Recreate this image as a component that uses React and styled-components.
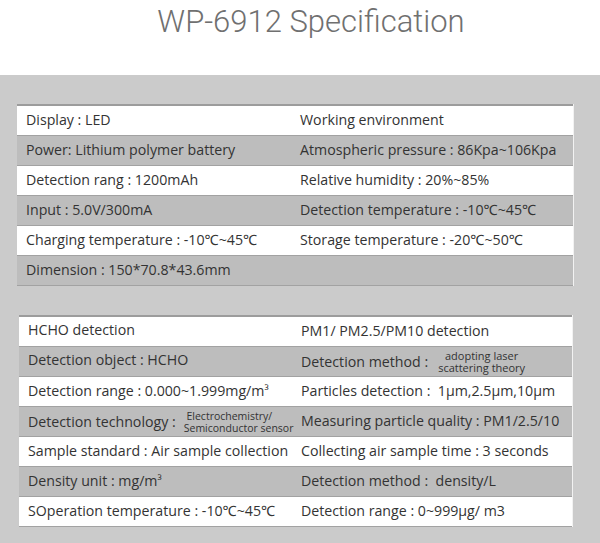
import React from "react";
import styled, { createGlobalStyle } from "styled-components";

const Global = createGlobalStyle`
  html, body { margin: 0; padding: 0; background: #fff; }
  body { width: 600px; height: 543px; overflow: hidden; }
`;

const Page = styled.div`
  width: 600px;
  height: 543px;
  display: flex;
  flex-direction: column;
  font-family: "Open Sans", "Noto Sans", sans-serif;
`;

const Header = styled.div`
  height: 75px;
  display: flex;
  justify-content: center;
  padding-left: 22px;
  box-sizing: border-box;
  background: #fff;
`;

const Title = styled.h1`
  margin: 0;
  font-family: Roboto, "Liberation Sans", sans-serif;
  font-weight: 300;
  font-size: 31px;
  color: #707070;
  line-height: 44px;
`;

const Band = styled.div`
  flex: 1;
  background: #cbcbcb;
  padding: 29px 27px 0 17px;
  display: flex;
  flex-direction: column;
  gap: 29px;
`;

const Table = styled.div`
  display: flex;
  flex-direction: column;
  border-top: 2px solid #9c9c9c;
  margin-left: ${(p) => p.$offset || 0}px;
  margin-right: ${(p) => p.$offsetR || 0}px;
  box-shadow: 1px 0 0 #f2f2f2;
`;

const Row = styled.div`
  display: grid;
  grid-template-columns: ${(p) => p.$split}px 1fr;
  height: 29px;
  align-items: center;
  background: ${(p) => (p.$alt ? "#bdbdbd" : "#ffffff")};
  border-bottom: 1px solid #a2a2a2;
  font-size: 14.2px;
  color: #333;
  white-space: nowrap;
`;

const Cell = styled.div`
  padding-left: ${(p) => p.$pad || 9}px;
  display: flex;
  align-items: center;
  margin-top: ${(p) => (p.$shift !== undefined ? p.$shift : -2)}px;
`;

const Small = styled.span`
  display: inline-block;
  font-size: ${(p) => p.$size || 10.5}px;
  line-height: 12px;
  margin-left: ${(p) => p.$ml || 6}px;
  text-align: ${(p) => p.$align || "left"};
  color: #333;
`;

const Sup = styled.span`
  font-size: 0.85em;
`;

const top = [
  ["Display : LED", "Working environment"],
  ["Power: Lithium polymer battery", "Atmospheric pressure : 86Kpa~106Kpa"],
  ["Detection rang : 1200mAh", "Relative humidity : 20%~85%"],
  ["Input : 5.0V/300mA", "Detection temperature : -10℃~45℃"],
  ["Charging temperature : -10℃~45℃", "Storage temperature : -20℃~50℃"],
  ["Dimension : 150*70.8*43.6mm", ""],
];

export default function App() {
  return (
    <Page>
      <Global />
      <Header>
        <Title>WP-6912 Specification</Title>
      </Header>
      <Band>
        <Table>
          {top.map(([a, b], i) => (
            <Row key={i} $alt={i % 2 === 1} $split={274}>
              <Cell>{a}</Cell>
              <Cell $pad={9}>{b}</Cell>
            </Row>
          ))}
        </Table>
        <Table $offset={2} $offsetR={1}>
          <Row $split={275}>
            <Cell $shift={-4}>HCHO detection</Cell>
            <Cell $pad={7}>PM1/ PM2.5/PM10 detection</Cell>
          </Row>
          <Row $alt $split={275}>
            <Cell $shift={-4}>Detection object : HCHO</Cell>
            <Cell $pad={7} $shift={0}>
              Detection method :
              <Small $ml={10} $size={11} $align="center">
                adopting laser
                <br />
                scattering theory
              </Small>
            </Cell>
          </Row>
          <Row $split={275}>
            <Cell>
              Detection range : 0.000~1.999mg/m<Sup>³</Sup>
            </Cell>
            <Cell $pad={7}>Particles detection :&nbsp; 1μm,2.5μm,10μm</Cell>
          </Row>
          <Row $alt $split={275}>
            <Cell $shift={0}>
              Detection technology :
              <Small $ml={8} $align="left">
                &nbsp;Electrochemistry/
                <br />
                Semiconductor sensor
              </Small>
            </Cell>
            <Cell $pad={7}>Measuring particle quality : PM1/2.5/10</Cell>
          </Row>
          <Row $split={275}>
            <Cell $shift={-3}>Sample standard : Air sample collection</Cell>
            <Cell $pad={7}>Collecting air sample time : 3 seconds</Cell>
          </Row>
          <Row $alt $split={275}>
            <Cell $shift={-3}>
              Density unit : mg/m<Sup>³</Sup>
            </Cell>
            <Cell $pad={7}>Detection method :&nbsp; density/L</Cell>
          </Row>
          <Row $split={275}>
            <Cell $shift={-3}>SOperation temperature : -10℃~45℃</Cell>
            <Cell $pad={7}>Detection range : 0~999μg/ m3</Cell>
          </Row>
        </Table>
      </Band>
    </Page>
  );
}
